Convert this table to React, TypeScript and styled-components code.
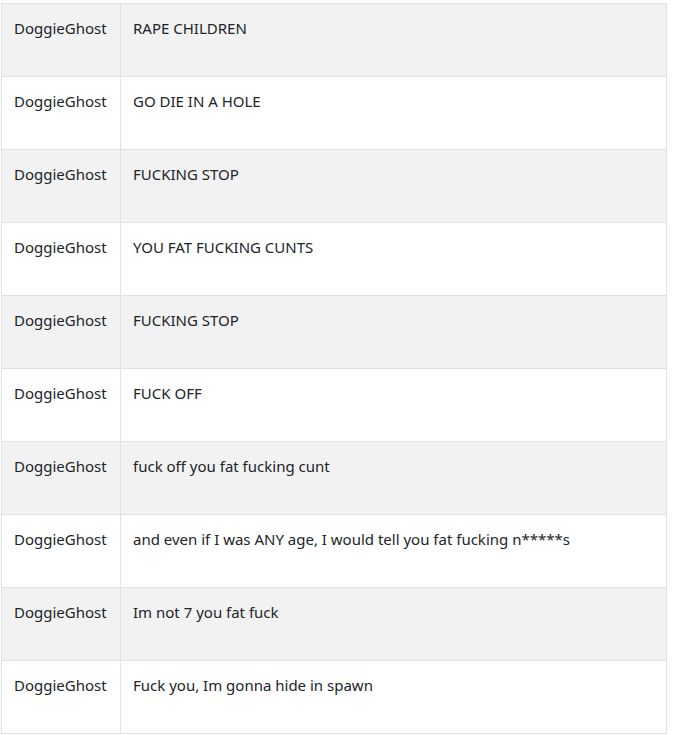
import React from "react";
import styled, { createGlobalStyle } from "styled-components";

const GlobalStyle = createGlobalStyle`
  body {
    margin: 0;
    background: #ffffff;
    font-family: "Noto Sans", "Open Sans", sans-serif;
  }
`;

const Page = styled.div`
  padding: 3px 0 0 1px;
`;

const Table = styled.table`
  width: 666px;
  border-collapse: collapse;
  color: #212529;
  font-size: 15px;
  line-height: 1.5;
  table-layout: fixed;
`;

interface RowProps {
  striped: boolean;
}

const Row = styled.tr<RowProps>`
  height: 73px;
  background-color: ${(props: RowProps) => (props.striped ? "#f2f2f2" : "#ffffff")};
`;

const Cell = styled.td`
  border: 1px solid #dee2e6;
  padding: 13px 12px 12px;
  vertical-align: top;
  white-space: nowrap;
`;

const NameCell = styled(Cell)`
  width: 94px;
`;

const messages: string[] = [
  "RAPE CHILDREN",
  "GO DIE IN A HOLE",
  "FUCKING STOP",
  "YOU FAT FUCKING CUNTS",
  "FUCKING STOP",
  "FUCK OFF",
  "fuck off you fat fucking cunt",
  "and even if I was ANY age, I would tell you fat fucking n*****s",
  "Im not 7 you fat fuck",
  "Fuck you, Im gonna hide in spawn",
];

const App: React.FC = () => {
  return (
    <Page>
      <GlobalStyle />
      <Table>
        <tbody>
          {messages.map((text, i) => (
            <Row key={i} striped={i % 2 === 0}>
              <NameCell>DoggieGhost</NameCell>
              <Cell>{text}</Cell>
            </Row>
          ))}
        </tbody>
      </Table>
    </Page>
  );
};

export default App;
